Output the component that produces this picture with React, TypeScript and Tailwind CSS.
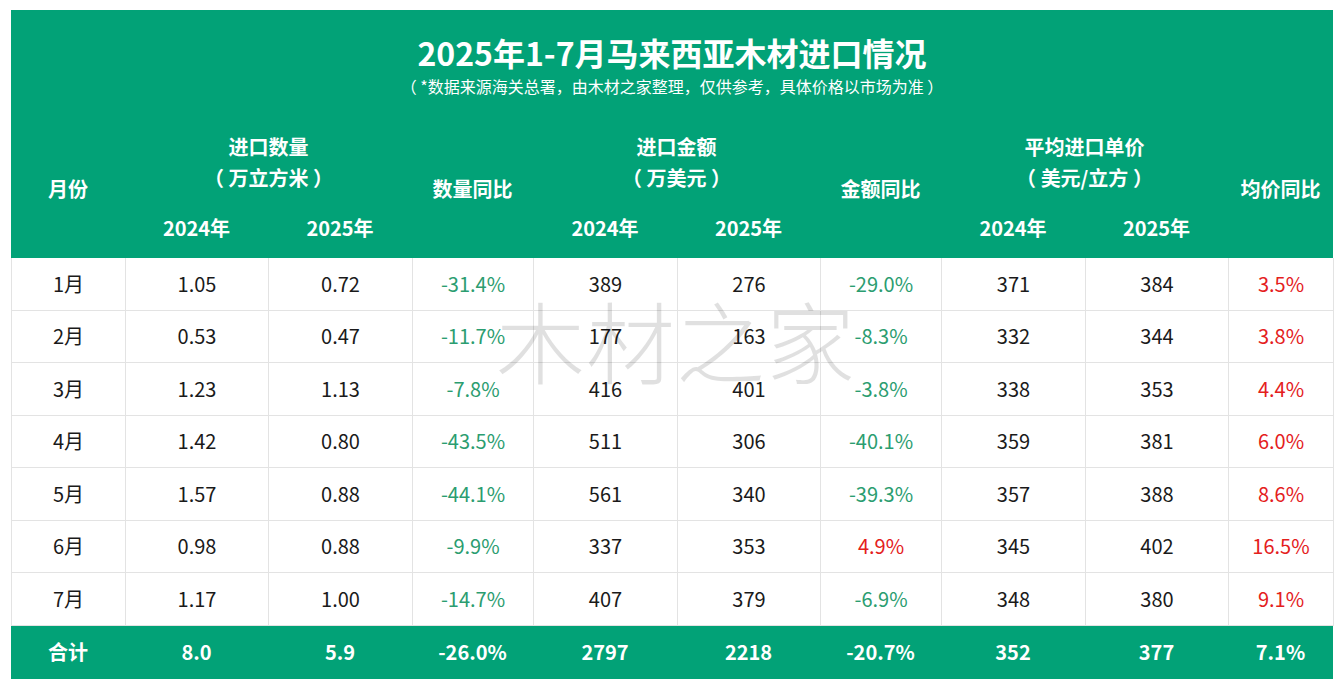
import React from 'react';

const GREEN = 'bg-[#02a277]';

type Row = {
  month: string;
  q24: string;
  q25: string;
  qYoy: string;
  a24: string;
  a25: string;
  aYoy: string;
  p24: string;
  p25: string;
  pYoy: string;
};

const rows: Row[] = [
  { month: '1月', q24: '1.05', q25: '0.72', qYoy: '-31.4%', a24: '389', a25: '276', aYoy: '-29.0%', p24: '371', p25: '384', pYoy: '3.5%' },
  { month: '2月', q24: '0.53', q25: '0.47', qYoy: '-11.7%', a24: '177', a25: '163', aYoy: '-8.3%', p24: '332', p25: '344', pYoy: '3.8%' },
  { month: '3月', q24: '1.23', q25: '1.13', qYoy: '-7.8%', a24: '416', a25: '401', aYoy: '-3.8%', p24: '338', p25: '353', pYoy: '4.4%' },
  { month: '4月', q24: '1.42', q25: '0.80', qYoy: '-43.5%', a24: '511', a25: '306', aYoy: '-40.1%', p24: '359', p25: '381', pYoy: '6.0%' },
  { month: '5月', q24: '1.57', q25: '0.88', qYoy: '-44.1%', a24: '561', a25: '340', aYoy: '-39.3%', p24: '357', p25: '388', pYoy: '8.6%' },
  { month: '6月', q24: '0.98', q25: '0.88', qYoy: '-9.9%', a24: '337', a25: '353', aYoy: '4.9%', p24: '345', p25: '402', pYoy: '16.5%' },
  { month: '7月', q24: '1.17', q25: '1.00', qYoy: '-14.7%', a24: '407', a25: '379', aYoy: '-6.9%', p24: '348', p25: '380', pYoy: '9.1%' },
];

const cols = 'grid grid-cols-[114px_143px_144px_121px_144px_143px_121px_144px_143px_105px]';

// negative = green, positive = red
const yoyColor = (v: string) => (v.startsWith('-') ? 'text-[#2b9d70]' : 'text-[#e4201c]');

const Cell = ({ children, className = '' }: { children: React.ReactNode; className?: string }) => (
  <div className={`flex items-center justify-center border-r border-b border-[#e3e3e3] ${className}`}>{children}</div>
);

const GroupHead = ({ title, unit }: { title: string; unit: string }) => (
  <div className="col-span-2 flex flex-col items-center justify-center leading-[31px] pt-1">
    <span>{title}</span>
    <span>（ {unit} ）</span>
  </div>
);

export default function App() {
  return (
    <div className="min-h-screen bg-white pl-[11px] pt-[10px] font-['Noto_Sans_CJK_SC','Noto_Sans',sans-serif]">
      <div className="w-[1322px]">
        <div className={`${GREEN} text-white`}>
          <div className="h-[110px] flex flex-col items-center pt-[22px]">
            <h1 className="text-[32px] font-bold leading-[40px]">2025年1-7月马来西亚木材进口情况</h1>
            <p className="text-[16px] leading-[20px] mt-[4px]">（ *数据来源海关总署，由木材之家整理，仅供参考，具体价格以市场为准 ）</p>
          </div>
          <div className={`${cols} grid-rows-[80px_58px] text-[20px] font-bold`}>
            <div className="row-span-2 flex items-center justify-center">月份</div>
            <GroupHead title="进口数量" unit="万立方米" />
            <div className="row-span-2 flex items-center justify-center">数量同比</div>
            <GroupHead title="进口金额" unit="万美元" />
            <div className="row-span-2 flex items-center justify-center">金额同比</div>
            <GroupHead title="平均进口单价" unit="美元/立方" />
            <div className="row-span-2 flex items-center justify-center">均价同比</div>
            <div className="flex items-center justify-center pb-[3px]">2024年</div>
            <div className="flex items-center justify-center pb-[3px]">2025年</div>
            <div className="flex items-center justify-center pb-[3px]">2024年</div>
            <div className="flex items-center justify-center pb-[3px]">2025年</div>
            <div className="flex items-center justify-center pb-[3px]">2024年</div>
            <div className="flex items-center justify-center pb-[3px]">2025年</div>
          </div>
        </div>

        <div className="relative border-l border-[#e3e3e3]">
          {rows.map((r) => (
            <div key={r.month} className={`${cols} h-[52.5px] text-[20px] text-[#1a1a1a]`}>
              <Cell>{r.month}</Cell>
              <Cell>{r.q24}</Cell>
              <Cell>{r.q25}</Cell>
              <Cell className={yoyColor(r.qYoy)}>{r.qYoy}</Cell>
              <Cell>{r.a24}</Cell>
              <Cell>{r.a25}</Cell>
              <Cell className={yoyColor(r.aYoy)}>{r.aYoy}</Cell>
              <Cell>{r.p24}</Cell>
              <Cell>{r.p25}</Cell>
              <Cell className={yoyColor(r.pYoy)}>{r.pYoy}</Cell>
            </div>
          ))}
          {/* watermark */}
          <div className="pointer-events-none absolute left-[484px] top-[36px] text-[89px] leading-none font-light tracking-[1px] text-black/[0.12] select-none">
            木材之家
          </div>
        </div>

        <div className={`${cols} ${GREEN} h-[53px] text-[20px] font-bold text-white`}>
          <div className="flex items-center justify-center">合计</div>
          <div className="flex items-center justify-center">8.0</div>
          <div className="flex items-center justify-center">5.9</div>
          <div className="flex items-center justify-center">-26.0%</div>
          <div className="flex items-center justify-center">2797</div>
          <div className="flex items-center justify-center">2218</div>
          <div className="flex items-center justify-center">-20.7%</div>
          <div className="flex items-center justify-center">352</div>
          <div className="flex items-center justify-center">377</div>
          <div className="flex items-center justify-center">7.1%</div>
        </div>
      </div>
    </div>
  );
}
